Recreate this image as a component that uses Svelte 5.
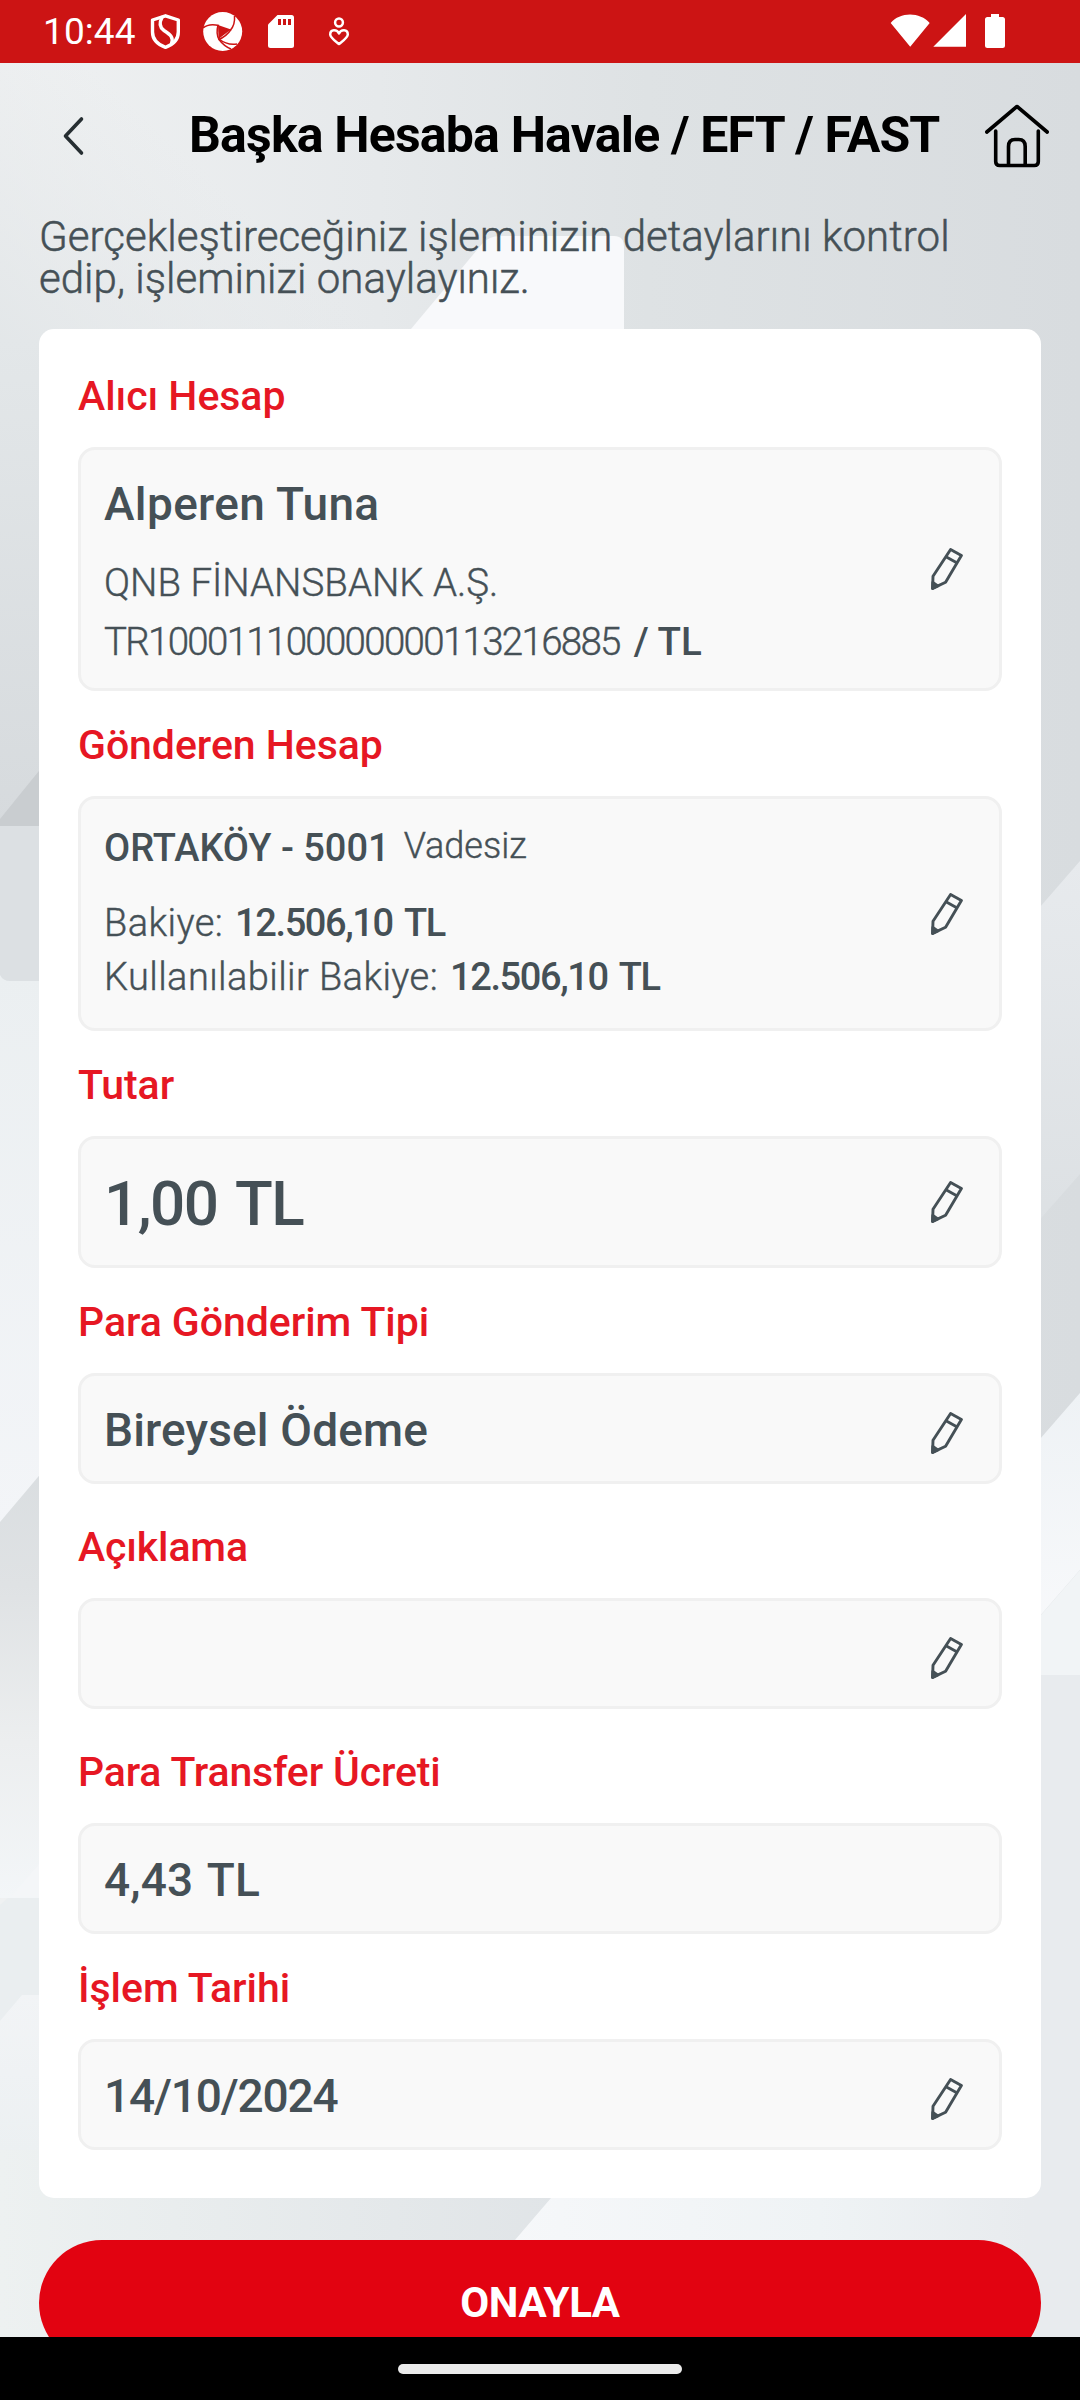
<script>
  const account = {
    name: 'Alperen Tuna',
    bank: 'QNB FİNANSBANK A.Ş.',
    iban: 'TR100011100000000113216885',
    currency: '/ TL'
  };
  const sender = {
    branch: 'ORTAKÖY - 5001',
    type: 'Vadesiz',
    balance: '12.506,10 TL',
    available: '12.506,10 TL'
  };
  const details = [
    { label: 'Tutar', value: '1,00 TL', kind: 'amount', edit: true },
    { label: 'Para Gönderim Tipi', value: 'Bireysel Ödeme', kind: 'text', edit: true },
    { label: 'Açıklama', value: '', kind: 'text', edit: true, wide: true },
    { label: 'Para Transfer Ücreti', value: '4,43 TL', kind: 'fee', edit: false, wide: true },
    { label: 'İşlem Tarihi', value: '14/10/2024', kind: 'date', edit: true }
  ];
</script>

{#snippet pencil()}
  <svg class="pencil" viewBox="0 0 32 42" aria-hidden="true">
    <path d="M19.6 1.5 30.4 7.6 14.6 34.2 1.6 40.4 2 28.2Z" />
    <path d="M15.4 9 26.2 15" />
    <path class="lead" d="M1.6 40.4 1.8 34.5 6.8 38Z" />
  </svg>
{/snippet}

<div class="phone">
  <div class="status">
    <span class="time">10:44</span>
    <svg class="left-icons" viewBox="0 0 210 63" aria-hidden="true">
      <g fill="none" stroke="#fff" stroke-width="3.4" stroke-linejoin="round" stroke-linecap="round">
        <path d="M25.500 15.800 38.300 20V32C38.300 40 32 45 25.500 47.300 19 45 12.500 40 12.500 32V20Z" />
        <path d="M22 17.500C19 23 19 27 24 30.500 30 34.500 34 37 31.500 43.500" />
      </g>
      <circle cx="82.700" cy="31.500" r="19.500" fill="#fff" />
      <path d="M78 25 91 29.500 78.500 39Z" fill="#cc1414" />
      <g fill="none" stroke="#cc1414" stroke-width="1.500">
        <path d="M63 28C67 24.500 73 24 79 25.500" />
        <path d="M94.500 16C95 22 94 26 90.500 30" />
        <path d="M78 25C76.500 31 77 36 79 39.500 82 43.500 86 47 91 49" />
        <path d="M91 29.500C88 34 84 37.500 78.500 39.500" />
        <path d="M79 39C84 43 91 45 97 44" />
      </g>
      <path d="M137.500 15H151.500Q154 15 154 17.500V45.500Q154 48 151.500 48H130.500Q128 48 128 45.500V24.500Z" fill="#fff" />
      <path d="M138 19h3v6h-3zM143 19h3v6h-3zM148 19h3v6h-3z" fill="#cc1414" />
      <g fill="none" stroke="#fff" stroke-width="2.500" stroke-linejoin="round">
        <circle cx="199" cy="22.500" r="3.900" />
        <path d="M199 33.500C197 29.300 190.300 29 190.200 34.500 190.200 37.500 194 40 199 44 204 40 207.800 37.500 207.800 34.500 207.700 29 201 29.300 199 33.500Z" />
      </g>
    </svg>
    <svg class="right-icons" viewBox="0 0 116 63" aria-hidden="true">
      <path d="M20.200 46.700.7 23C10 11.500 30 11.500 39.700 23ZM43.300 46.700 76 14V46.700ZM101 17V14H109V17H112.500Q115 17 115 19.500V45.500Q115 48 112.500 48H97.500Q95 48 95 45.500V19.500Q95 17 97.500 17Z" fill="#fff" />
    </svg>
  </div>

  <div class="screen">
    <svg class="backdrop" viewBox="0 63 1080 2274" aria-hidden="true">
      <defs>
        <linearGradient id="base" x1="0" y1="0" x2="1" y2="0">
          <stop offset="0" stop-color="#eff1f2" /><stop offset=".35" stop-color="#e6e9eb" />
          <stop offset=".6" stop-color="#dee2e4" /><stop offset="1" stop-color="#d8dcdf" />
        </linearGradient>
        <linearGradient id="corner" gradientUnits="userSpaceOnUse" x1="150" y1="120" x2="-40" y2="330">
          <stop offset="0" stop-color="#e4e7e9" stop-opacity="0" /><stop offset="1" stop-color="#e2e6e8" />
        </linearGradient>
        <linearGradient id="leftTop" x1="0" y1="0" x2="0" y2="1">
          <stop offset="0" stop-color="#e3e7e9" /><stop offset="1" stop-color="#d6dadd" />
        </linearGradient>
        <linearGradient id="leftMid" x1="0" y1="0" x2="0" y2="1">
          <stop offset="0" stop-color="#ebeff1" /><stop offset="1" stop-color="#f3f5f8" />
        </linearGradient>
        <linearGradient id="leftLow" x1="0" y1="0" x2="0" y2="1">
          <stop offset="0" stop-color="#d9dde0" /><stop offset=".3" stop-color="#dfe2e4" />
          <stop offset=".65" stop-color="#eceeef" /><stop offset="1" stop-color="#f3f6f8" />
        </linearGradient>
        <linearGradient id="foot" x1="0" y1="0" x2="1" y2="0">
          <stop offset="0" stop-color="#edf1f1" /><stop offset="1" stop-color="#e0e4e7" />
        </linearGradient>
        <linearGradient id="footRight" x1="0" y1="0" x2="1" y2="0">
          <stop offset="0" stop-color="#f8f9fb" /><stop offset=".6" stop-color="#eff3f5" />
          <stop offset=".92" stop-color="#e8ebee" /><stop offset="1" stop-color="#e8ebee" />
        </linearGradient>
        <linearGradient id="rightMid" x1="0" y1="0" x2="0" y2="1">
          <stop offset="0" stop-color="#e7eaed" /><stop offset="1" stop-color="#dce0e3" />
        </linearGradient>
        <linearGradient id="rightLow" x1="0" y1="0" x2="0" y2="1">
          <stop offset="0" stop-color="#eef2f5" /><stop offset="1" stop-color="#f8f9fb" />
        </linearGradient>
        <linearGradient id="leftFade" x1="0" y1="0" x2="0" y2="1">
          <stop offset="0" stop-color="#f2f4f6" /><stop offset="1" stop-color="#ecf0f2" />
        </linearGradient>
      </defs>
      <path d="M0 63H1080V2337H0Z" fill="url(#base)" />
      <path d="M0 63H400V340H0Z" fill="url(#corner)" />
      <path d="M0 340H60V830H0Z" fill="url(#leftTop)" />
      <path d="M411 329 482 244Q489 236 500 236H614Q624 236 624 247V329Z" fill="#f8f9fb" />
      <path d="M0 819 60 745V826H0Z" fill="#c9cdd0" />
      <path d="M0 826H60V1010H0Z" fill="#dce0e3" />
      <path d="M0 975Q3 981 10 981H60V1523H0Z" fill="url(#leftMid)" />
      <path d="M0 1522 60 1451V1898H0Z" fill="url(#leftLow)" />
      <path d="M10 1897 60 1840V1897Z" fill="#f4f6f8" />
      <path d="M0 1905 8 1898H60V2337H0Z" fill="#eaeef0" />
      <path d="M0 2021 22 1995H60V2150H0Z" fill="url(#leftFade)" />
      <path d="M1020 930 1080 861V1174L1020 1242Z" fill="url(#rightMid)" />
      <path d="M1020 1462 1080 1393V1570L1020 1639Z" fill="url(#rightLow)" />
      <path d="M1020 1639 1080 1570V1675H1020Z" fill="#f1f4f6" />
      <path d="M1020 1675H1080V2337H1020Z" fill="#e8ebee" />
      <path d="M0 2150H570V2337H0Z" fill="url(#foot)" />
      <path d="M515 2240 551 2198V2150H1080V2337H430Z" fill="url(#footRight)" />
    </svg>

    <header>
      <svg class="back" viewBox="0 0 24 40" aria-hidden="true">
        <path d="M19.500 3 3.500 20 19.500 37" />
      </svg>
      <h1>Başka Hesaba Havale / EFT / FAST</h1>
      <svg class="home" viewBox="0 0 64 64" aria-hidden="true">
        <path d="M1.800 28 32 2.500 62.200 28M10.700 27V57.500Q10.700 61.500 14.700 61.500H49.300Q53.300 61.500 53.300 57.500V27M23.500 61V42.500Q23.500 35.500 30 35.500H33.700Q40.200 35.500 40.200 42.500V61" />
      </svg>
    </header>

    <p class="intro">Gerçekleştireceğiniz işleminizin detaylarını kontrol<br />edip, işleminizi onaylayınız.</p>

    <main class="card">
      <h2>Alıcı Hesap</h2>
      <section class="box receiver">
        <div class="info">
          <div class="name">{account.name}</div>
          <div class="line"><span>{account.bank}</span></div>
          <div class="line"><span class="iban">{account.iban}</span><b>{account.currency}</b></div>
        </div>
        {@render pencil()}
      </section>

      <h2>Gönderen Hesap</h2>
      <section class="box sender">
        <div class="info">
          <div class="branch"><b>{sender.branch}</b><span>{sender.type}</span></div>
          <div class="line balance"><span>Bakiye:</span><b>{sender.balance}</b></div>
          <div class="line balance"><span>Kullanılabilir Bakiye:</span><b>{sender.available}</b></div>
        </div>
        {@render pencil()}
      </section>

      {#each details as item}
        <h2 class:wide={item.wide}>{item.label}</h2>
        <section class="box single {item.kind}">
          <div class="value">{item.value}</div>
          {#if item.edit}{@render pencil()}{/if}
        </section>
      {/each}
    </main>

    <button>ONAYLA</button>
  </div>

  <div class="nav"><span></span></div>
</div>

<style>
  .phone {
    width: 1080px;
    height: 2400px;
    display: flex;
    flex-direction: column;
    overflow: hidden;
    background: #000;
    font-family: Roboto, 'Liberation Sans', sans-serif;
    color: #455056;
  }
  .status {
    flex: none;
    height: 63px;
    display: flex;
    align-items: center;
    background: #cc1414;
    color: #fff;
  }
  .time {
    width: 97px;
    padding-left: 43px;
    font-size: 37px;
    line-height: 63px;
    letter-spacing: 0.1px;
    white-space: nowrap;
  }
  .left-icons { width: 210px; height: 63px; }
  .right-icons { width: 116px; height: 63px; margin: 0 74px 0 auto; }

  .screen {
    position: relative;
    flex: 1;
    min-height: 0;
    overflow: hidden;
  }
  .backdrop {
    position: absolute;
    inset: 0;
    width: 1080px;
    height: 2274px;
  }
  header, .intro, .card, button { position: relative; }

  header {
    display: flex;
    align-items: center;
    height: 145px;
    padding: 0 31px 0 62px;
  }
  .back {
    width: 24px;
    height: 40px;
    fill: none;
    stroke: #262e32;
    stroke-width: 3.6;
    stroke-linecap: round;
    stroke-linejoin: round;
  }
  .home {
    width: 64px;
    height: 64px;
    fill: none;
    stroke: #000;
    stroke-width: 3.6;
    stroke-linecap: round;
    stroke-linejoin: round;
  }
  h1 {
    flex: 1;
    margin: 0;
    padding-left: 103px;
    font-size: 50px;
    line-height: 58px;
    padding-bottom: 2px;
    font-weight: 700;
    letter-spacing: -0.82px;
    color: #000;
    white-space: nowrap;
  }
  .intro {
    margin: 8px 0 0 39px;
    font-size: 42px;
    line-height: 42px;
    font-weight: 300;
    letter-spacing: 0.03px;
    -webkit-text-stroke: 0.5px currentColor;
    white-space: nowrap;
  }
  .card {
    margin: 29px 39px 0;
    padding: 13px 39px 48px;
    border-radius: 15px;
    background: #fff;
  }
  h2 {
    margin: 0;
    padding: 30px 0 27px;
    font-size: 41px;
    line-height: 48px;
    font-weight: 500;
    letter-spacing: -0.05px;
    color: #e61723;
  }
  h2.wide { padding-top: 39px; letter-spacing: -0.15px; }

  .box {
    box-sizing: border-box;
    display: flex;
    align-items: center;
    justify-content: space-between;
    padding: 0 36px 0 23px;
    border: 3px solid #f0f0f0;
    border-radius: 17px;
    background: #f9f9f9;
  }
  .receiver { height: 244px; }
  .sender { height: 235px; }
  .single { height: 111px; }
  .amount { height: 132px; }
  .info { align-self: flex-start; }
  .receiver .info { padding-top: 27px; }
  .sender .info { padding-top: 24px; }
  .name {
    margin-bottom: 22px;
    font-size: 46px;
    line-height: 54px;
    font-weight: 500;
    letter-spacing: 0.35px;
  }
  .line {
    display: flex;
    gap: 14px;
    font-size: 38.5px;
    line-height: 59px;
    white-space: nowrap;
  }
  .line span, .branch span {
    font-weight: 300;
    -webkit-text-stroke: 0.4px currentColor;
  }
  .line .iban { letter-spacing: -1.7px; }
  b { font-weight: 500; }
  .branch {
    display: flex;
    align-items: flex-start;
    gap: 14px;
    margin-bottom: 23px;
    font-size: 38px;
    line-height: 50px;
  }
  .branch span {
    font-size: 36px;
    line-height: 46px;
  }
  .balance {
    gap: 12px;
    font-size: 38px;
    line-height: 54px;
  }
  .balance span { letter-spacing: 0.4px; }
  .balance b { letter-spacing: -1.4px; word-spacing: 4px; }

  .value {
    padding-top: 3px;
    font-size: 46px;
    line-height: 54px;
    font-weight: 500;
    letter-spacing: 0.15px;
  }
  .single:not(.amount) .value { padding-top: 2px; }
  .amount .value {
    font-size: 62px;
    line-height: 72px;
    letter-spacing: -1.5px;
    word-spacing: 5px;
  }
  .fee .value { word-spacing: 3px; }
  .date .value { letter-spacing: -1.15px; }

  .pencil {
    width: 32px;
    height: 42px;
    fill: none;
    stroke: #455056;
    stroke-width: 2.9;
    stroke-linejoin: round;
  }
  .text .pencil, .date .pencil { margin-top: 9px; }
  .lead { fill: #455056; }

  button {
    display: block;
    width: 1002px;
    height: 126px;
    margin: 42px 39px 0;
    padding: 0;
    border: 0;
    border-radius: 63px;
    background: #e20311;
    color: #fff;
    font: 700 42px/126px Roboto, 'Liberation Sans', sans-serif;
    letter-spacing: -0.4px;
  }
  .nav {
    flex: none;
    height: 63px;
    display: flex;
    align-items: center;
    justify-content: center;
    background: #000;
  }
  .nav span {
    width: 284px;
    height: 10px;
    border-radius: 5px;
    background: #ebebeb;
  }
</style>
